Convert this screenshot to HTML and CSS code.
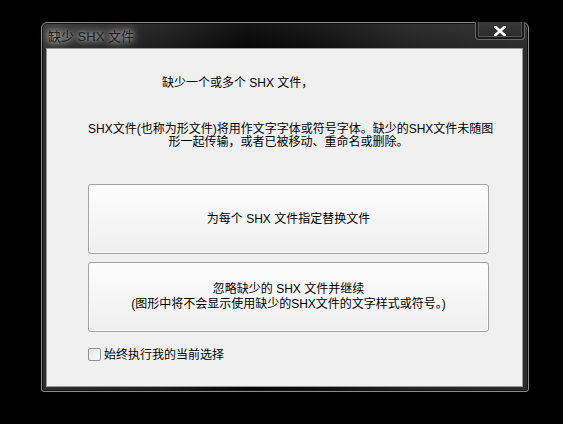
FILE: index.html
```html
<!DOCTYPE html>
<html lang="zh-CN">
<head>
<meta charset="utf-8">
<title>缺少 SHX 文件</title>
<link rel="stylesheet" href="styles.css">
</head>
<body>
<div class="window">
  <div class="titlebar">
    <span class="title">缺少 SHX 文件</span>
  </div>
  <div class="close">
    <svg width="12" height="10" viewBox="0 0 12 10"><path d="M1.5 1 L10.5 9 M10.5 1 L1.5 9" stroke="#ffffff" stroke-width="2.6" stroke-linecap="square"/></svg>
  </div>
  <div class="client">
    <div class="msg">缺少一个或多个 SHX 文件，</div>
    <div class="para">SHX文件(也称为形文件)将用作文字字体或符号字体。缺少的SHX文件未随图<br>形一起传输，或者已被移动、重命名或删除。</div>
    <div class="buttons">
      <div class="btn"><span>为每个 SHX 文件指定替换文件</span></div>
      <div class="btn two"><span>忽略缺少的 SHX 文件并继续<br>(图形中将不会显示使用缺少的SHX文件的文字样式或符号。)</span></div>
    </div>
    <label class="check"><span class="box"></span><span class="label">始终执行我的当前选择</span></label>
  </div>
</div>
</body>
</html>
```
FILE: styles.css
```css
html, body {
  margin: 0;
  padding: 0;
  background: #000;
}
body {
  padding: 22px 0 0 41px;
  font-family: "Liberation Sans", "Noto Sans CJK SC", sans-serif;
  font-size: 12px;
  color: #000;
}
.window {
  position: relative;
  width: 477px;
  height: 364px;
  border: 1px solid #8c8c8c;
  border-radius: 6px 6px 3px 3px;
  background:
    linear-gradient(180deg, rgba(255,255,255,0.06) 0px, rgba(255,255,255,0) 26px),
    linear-gradient(90deg, #2e2e2e 0%, #1c1c1c 25%, #050505 42%, #0d0d0d 55%, #222 75%, #2b2b2b 100%);
  box-shadow: inset 0 0 0 1px #111;
  display: flex;
  flex-direction: column;
  padding: 0 5px 4px 4px;
}
.titlebar {
  height: 25px;
  display: flex;
  align-items: center;
  padding-left: 2px;
}
.title {
  font-size: 13px;
  color: #1c1c1c;
  line-height: 16px;
  margin-top: 2px;
  text-shadow: 0 0 4px rgba(255,255,255,0.6), 0 0 8px rgba(255,255,255,0.5), 0 0 12px rgba(255,255,255,0.45), 0 0 16px rgba(255,255,255,0.35);
}
.close {
  position: absolute;
  left: 433px;
  top: -1px;
  width: 48px;
  height: 17px;
  border: 1px solid #666;
  border-top: none;
  border-radius: 0 0 4px 4px;
  background: linear-gradient(180deg, #3a3a3a, #272727);
  box-shadow: inset 0 -2px 0 #1a1a1a, inset 2px 0 0 #1a1a1a, inset -2px 0 0 #1a1a1a, inset 0 -3px 0 #555, inset 3px 0 0 #555, inset -3px 0 0 #555;
  display: flex;
  align-items: center;
  justify-content: center;
}
.close svg {
  display: block;
  margin-top: 0;
}
.client {
  width: 475px;
  height: 337px;
  border: 1px solid #9a9a9a;
  background: #f0f0f0;
  display: flex;
  flex-direction: column;
}
.msg {
  margin-top: 27px;
  padding-left: 115px;
  line-height: 14px;
  white-space: nowrap;
}
.para {
  margin-top: 33px;
  margin-left: 41px;
  width: 401px;
  text-align: center;
  line-height: 13px;
  white-space: nowrap;
}
.buttons {
  margin-top: 35px;
  margin-left: 41px;
  width: 401px;
  display: flex;
  flex-direction: column;
  gap: 8px;
}
.btn {
  height: 68px;
  border: 1px solid #a3a3a3;
  border-radius: 3px;
  background: linear-gradient(180deg, #fdfdfd 0%, #f6f6f6 50%, #efefef 100%);
  box-shadow: inset 0 0 0 1px #fbfbfb;
  display: flex;
  align-items: center;
  justify-content: center;
  text-align: center;
  line-height: 14px;
  white-space: nowrap;
}
.btn.two {
  line-height: 15px;
}
.check {
  margin-top: 16px;
  margin-left: 41px;
  display: flex;
  align-items: center;
  gap: 3px;
  height: 13px;
}
.box {
  width: 11px;
  height: 11px;
  border: 1px solid #8e8f8f;
  border-radius: 2px;
  background: linear-gradient(135deg, #e6e6e6, #fbfbfb);
}
.label {
  line-height: 14px;
  white-space: nowrap;
}
```
